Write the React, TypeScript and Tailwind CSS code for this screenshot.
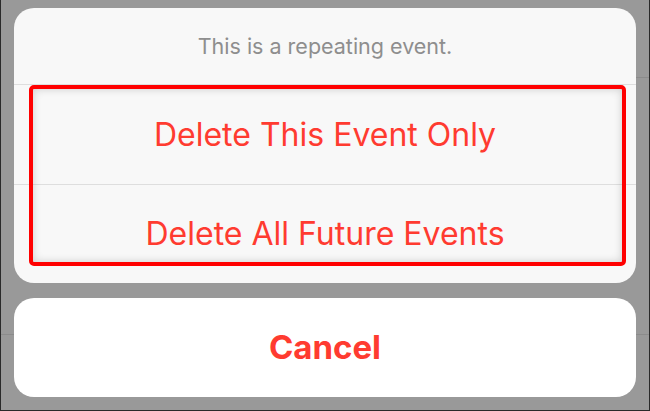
import React from 'react';

interface SheetAction {
  id: string;
  label: string;
  height: string;
}

const actions: SheetAction[] = [
  { id: 'this', label: 'Delete This Event Only', height: 'h-[100px]' },
  { id: 'future', label: 'Delete All Future Events', height: 'h-[98px]' },
];

export default function App() {
  return (
    <div
      className="relative w-[650px] h-[411px] overflow-hidden bg-[#999999] border-x border-b border-[#2a2a2a]"
      style={{ fontFamily: 'Inter, "Noto Sans", sans-serif' }}
    >
      {/* dimmed table separators behind the sheet */}
      <div className="absolute left-[16px] right-0 top-[77px] h-px bg-[#8b8b8b]" />
      <div className="absolute left-0 right-0 top-[334px] h-px bg-[#8b8b8b]" />

      <div className="relative flex flex-col gap-[15px] px-[13px] pt-[8px]">
        {/* Action group */}
        <div className="relative rounded-[20px] bg-[#f8f8f8] overflow-hidden">
          <div className="h-[77px] flex items-center justify-center border-b border-[#dedede]">
            <span className="text-[21.5px] text-[#8e8e8e]">This is a repeating event.</span>
          </div>
          {actions.map((action, i) => (
            <button
              key={action.id}
              className={`w-full flex items-center justify-center ${action.height} ${
                i < actions.length - 1 ? 'border-b border-[#dedede]' : ''
              }`}
            >
              <span className="text-[32px] text-[#ff3b30]">{action.label}</span>
            </button>
          ))}

          {/* Highlight around the delete options */}
          <div className="absolute left-[15px] right-[10px] top-[77px] h-[181px] rounded-[5px] border-[4px] border-[#ff0000] shadow-[inset_0_0_8px_rgba(0,0,0,0.18)] pointer-events-none" />
        </div>

        {/* Cancel */}
        <button className="h-[99px] rounded-[20px] bg-white flex items-center justify-center">
          <span className="text-[33px] font-bold text-[#ff3b30]">Cancel</span>
        </button>
      </div>
    </div>
  );
}
